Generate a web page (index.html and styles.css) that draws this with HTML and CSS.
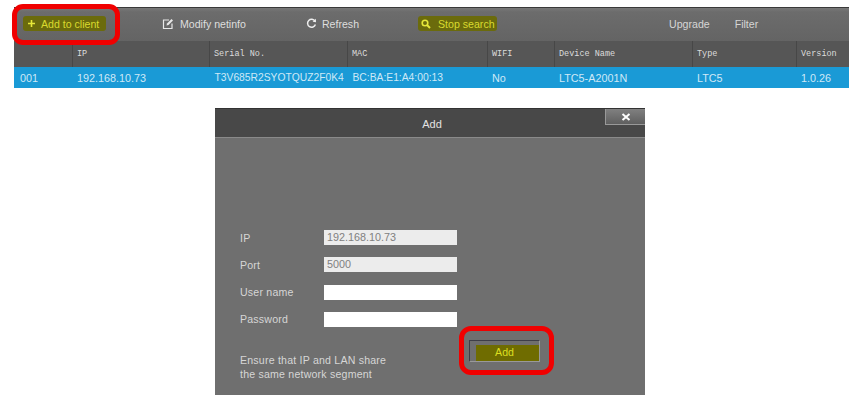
FILE: index.html
```html
<!DOCTYPE html>
<html lang="en">
<head>
<meta charset="utf-8">
<title>Add to client</title>
<link rel="stylesheet" href="styles.css">
</head>
<body>
<section class="panel">
  <div class="toolbar">
    <span class="tool tool-add hl"><svg class="ic" width="9" height="9" viewBox="0 0 9 9"><path d="M4.5 1v7M1 4.5h7" stroke="#e6e83a" stroke-width="1.6" fill="none"/></svg><span class="lime">Add to client</span></span>
    <span class="tool tool-mod"><svg width="12" height="12" viewBox="0 0 12 12"><path d="M7 2H1.5v8.5H10V5.5" stroke="#e8e8e8" stroke-width="1.2" fill="none"/><path d="M4.5 7.5 5 5.5 9.5 1 11 2.5 6.5 7Z" fill="#e8e8e8"/></svg><span>Modify netinfo</span></span>
    <span class="tool tool-ref"><svg width="11" height="11" viewBox="0 0 11 11"><path d="M9 3.2A4 4 0 1 0 9.4 6.5" stroke="#eee" stroke-width="1.5" fill="none"/><path d="M6.6 3.8 10 4.2 9.8 0.8Z" fill="#eee"/></svg><span>Refresh</span></span>
    <span class="tool tool-stop hl"><svg width="10" height="10" viewBox="0 0 10 10"><circle cx="4" cy="4" r="2.8" stroke="#e6e83a" stroke-width="1.6" fill="none"/><path d="M6 6 9 9" stroke="#e6e83a" stroke-width="2"/></svg><span class="lime">Stop search</span></span>
    <span class="tool tool-up">Upgrade</span>
    <span class="tool tool-fil">Filter</span>
  </div>
  <div class="grid head">
    <span></span><span>IP</span><span>Serial No.</span><span>MAC</span><span>WIFI</span><span>Device Name</span><span>Type</span><span>Version</span>
  </div>
  <div class="grid row">
    <span>001</span><span>192.168.10.73</span><span class="narrow">T3V685R2SYOTQUZ2F0K4</span><span class="narrow">BC:BA:E1:A4:00:13</span><span>No</span><span>LTC5-A2001N</span><span>LTC5</span><span>1.0.26</span>
  </div>
  <div class="ring ring-top"></div>
</section>
<section class="dialog">
  <header class="title"><span class="title-text">Add</span><span class="close"><svg width="10" height="8" viewBox="0 0 10 8"><path d="M1.5 1 8.5 7M8.5 1 1.5 7" stroke="#fff" stroke-width="2"/></svg></span></header>
  <div class="body">
    <form class="form">
      <label>IP</label><div class="field off">192.168.10.73</div>
      <label>Port</label><div class="field off">5000</div>
      <label>User name</label><div class="field"></div>
      <label>Password</label><div class="field"></div>
    </form>
    <div class="foot">
      <p class="note">Ensure that IP and LAN share<br>the same network segment</p>
      <div class="btn"><span class="btn-in">Add</span><div class="ring ring-btn"></div></div>
    </div>
  </div>
</section>
</body>
</html>
```
FILE: styles.css
```css
* { box-sizing: border-box; }
html, body { margin: 0; padding: 0; background: #fff; }
body {
  width: 858px;
  height: 400px;
  overflow: hidden;
  padding: 7px 9px 0 14px;
  font-family: "Liberation Sans", Arial, sans-serif;
  font-size: 10.6px;
  color: #e6e6e6;
}
.panel { position: relative; width: 835px; }
.toolbar {
  height: 34px;
  display: flex;
  align-items: center;
  padding-bottom: 2px;
  border-top: 1px solid #3a3a3a;
  background: linear-gradient(#787878, #6c6c6c 12%, #646464);
  color: #dedede;
}
.tool { display: flex; align-items: center; gap: 6px; white-space: nowrap; }
.hl { background: #6b6b0c; height: 15px; border-radius: 3px; }
.lime { color: #d9da2e; }
.tool-add { margin-left: 9px; width: 83px; padding-left: 4px; gap: 5px; }
.tool-mod { margin-left: 56px; gap: 6px; }
.tool-ref { margin-left: 60px; gap: 5px; }
.tool-stop { margin-left: 59px; width: 79px; padding-left: 3px; gap: 7px; }
.tool-up { margin-left: 172px; color: #d6d6d6; }
.tool-fil { margin-left: 25px; color: #d6d6d6; }
.grid {
  display: grid;
  grid-template-columns: 58px 137px 138px 140px 67px 138px 104px 53px;
}
.head {
  height: 26px;
  background: #565656;
  align-items: stretch;
  font-family: "Liberation Mono", monospace;
  font-size: 8.5px;
  color: #dcdcdc;
}
.head span {
  display: flex;
  align-items: center;
  padding-left: 4px;
  border-left: 1px solid #474747;
  white-space: nowrap;
}
.head span:first-child { border-left: 0; }
.row {
  height: 21px;
  align-items: center;
  background: #1a9ad6;
  color: #cfe9f6;
  font-size: 10.8px;
}
.row span { padding-left: 5px; white-space: nowrap; }
.row span:first-child { padding-left: 6px; }
.row .narrow { font-size: 10.3px; padding-left: 5.5px; }
.ring { position: absolute; border: 5px solid #f00000; pointer-events: none; }
.ring-top { left: -2px; top: -3px; width: 108px; height: 41px; border-radius: 11px; }
.dialog {
  width: 430px;
  height: 287px;
  margin: 20px 0 0 201px;
  background: #6f6f6f;
  display: flex;
  flex-direction: column;
}
.title {
  position: relative;
  height: 30px;
  flex: none;
  display: flex;
  align-items: center;
  justify-content: center;
  background: #484848;
  border-top: 1px solid #333;
  border-bottom: 1px solid #8a8a8a;
  color: #e2e2e2;
}
.title-text { padding: 2px 0 0 4px; font-size: 11px; }
.close {
  position: absolute;
  right: 0;
  top: 0;
  width: 40px;
  height: 16px;
  display: flex;
  align-items: center;
  justify-content: center;
  background: linear-gradient(#808080, #5f5f5f);
  border-left: 1px solid #999;
  border-bottom: 1px solid #999;
}
.body { flex: 1; padding: 92px 0 0 25px; }
.form {
  display: grid;
  grid-template-columns: 84px 133px;
  grid-auto-rows: 15px;
  row-gap: 12.3px;
  align-items: center;
}
.form label { color: #d6d6d6; letter-spacing: 0.2px; }
.field {
  height: 15px;
  background: #fff;
  color: #808080;
  line-height: 15px;
  padding-left: 3px;
  font-size: 10.8px;
}
.field.off { background: #ececec; }
.foot { position: relative; display: flex; margin-top: 13px; }
.note {
  margin: 13px 0 0;
  line-height: 14px;
  color: #d6d6d6;
  letter-spacing: 0.2px;
  width: 229px;
}
.btn {
  position: relative;
  width: 71px;
  height: 22px;
  border: 1px solid #3e3e48;
  border-right-color: #999;
  border-bottom-color: #999;
  display: flex;
  justify-content: flex-end;
  align-items: flex-end;
  flex: none;
}
.btn-in {
  width: 63px;
  height: 16px;
  padding-right: 6px;
  background: #6f6c00;
  color: #dcdf20;
  text-align: center;
  line-height: 14px;
}
.ring-btn { left: -11px; top: -15px; width: 95px; height: 49px; border-radius: 12px; }
```
